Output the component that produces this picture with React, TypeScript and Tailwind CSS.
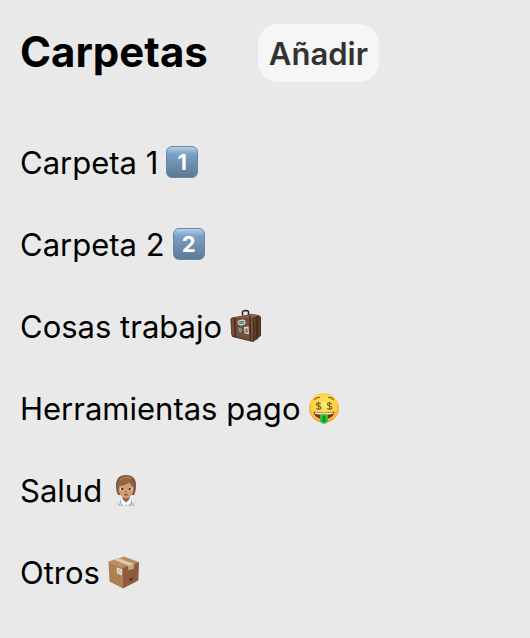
import type { ReactNode } from "react";

function Keycap({ digit }: { digit: string }) {
  return (
    <span className="flex size-8 items-center justify-center rounded-md border border-[#6488a8] bg-linear-to-b from-[#b5d0e5] via-[#789fc4] via-25% to-[#5e7a94] text-[22px] leading-none font-bold text-white">
      {digit}
    </span>
  );
}

function Suitcase() {
  return (
    <svg viewBox="0 0 32 34" className="h-[34px] w-8" aria-hidden="true">
      <path d="M12.5 6.500V3.500Q12.500 2 14 1.800L16.500 1.500Q18.500 1.500 18.500 3.500V6" fill="none" stroke="#282424" strokeWidth="1.500" />
      <path d="M2 8.500 22 5l7 1.300 2 2v18.500L23 33 2.600 28Q1.500 27 1.200 25L.5 11Q.4 9.400 2 8.500Z" fill="#4a2c20" />
      <path d="M2 9.500 21.500 7l1.500 2V32L3 27.300 1.400 24V11Z" fill="#74503b" />
      <path d="M2 8.900 22 5.500l7 1.300-6.500 2Z" fill="#8a634b" />
      <path d="m23.500 9 6.500-2.200.5 2v17.500L24 32Z" fill="#5c3a2a" />
      <path d="M4.500 9.300 5.500 28M20 7 20.500 31M27 7.500v23" stroke="#43271d" strokeWidth="1.300" />
      <ellipse cx="11.600" cy="13.500" rx="4" ry="2.800" transform="rotate(-12 11.600 13.500)" fill="#d8ddcd" />
      <ellipse cx="11.600" cy="13.500" rx="2.900" ry="1.700" transform="rotate(-12 11.600 13.500)" fill="#398e9c" />
      <path d="m9.200 14.500 2-1.500 1.500 1 1.500-.8" fill="none" stroke="#86a95b" />
      <path d="m8 20.500 2-2 2.500 2.500-2.200 2.500Z" fill="#83baa4" />
      <path d="m9.200 20.700 1-1 .9 1.400-.9 1Z" fill="#356a65" />
      <path d="m14 18 4.500-.6.4 7.800-4.300-.7Z" fill="#d8d6cb" />
      <path d="m15 19.500 2.700-.3.300 4.500-2.700-.3Z" fill="#74a0a4" />
      <path d="m16 23.500.5-5 1 5Z" fill="#c84d3b" />
    </svg>
  );
}

function MoneyFace() {
  return (
    <svg viewBox="0 0 32 32" className="size-8" aria-hidden="true">
      <defs>
        <radialGradient id="face" cx=".5" cy=".4" r=".6">
          <stop offset="0" stopColor="#ffec70" />
          <stop offset=".7" stopColor="#fdcf42" />
          <stop offset="1" stopColor="#f0a02a" />
        </radialGradient>
      </defs>
      <circle cx="16" cy="16" r="15" fill="url(#face)" />
      <path d="M6.500 7.700q2-2.500 5-2.200M20.500 5.500q3-.3 5 2.200" fill="none" stroke="#96601e" strokeWidth="1.200" strokeLinecap="round" />
      <g fill="none" stroke="#8a6a22" strokeWidth="1.300">
        <path d="M12.800 11.800q-4.300-2-4.300.4c0 2.300 4.500 1.200 4.500 3.500 0 2.200-4.300 1.200-4.700.6M10.600 9.800v8.200" />
        <path d="M23.800 11.800q-4.300-2-4.300.4c0 2.300 4.500 1.200 4.500 3.500 0 2.200-4.300 1.200-4.700.6M21.600 9.800v8.200" />
      </g>
      <path d="M5.500 19.500q10.500 2.500 21 0-1.300 7.700-10.500 7.700T5.500 19.500Z" fill="#713017" />
      <path d="M6.500 20.200q9.500 2 19 0l-.9 1.800q-8.600 1.400-17.200 0Z" fill="#fff1df" />
      <path d="M12 23q4-1.500 8 0v6q-1 2.800-4 2.800T12 29Z" fill="#29c437" />
      <path d="M17.800 25.400q-3.300-1.200-3.300.4c0 1.700 3.200.8 3.200 2.400 0 1.500-3 1-3.400.4M16 24v6" fill="none" stroke="#167a25" />
    </svg>
  );
}

function HealthWorker() {
  return (
    <svg viewBox="0 0 32 32" className="size-8" aria-hidden="true">
      <path d="M4.500 32q0-4.500 4.300-6l4.200-2h6l4.200 2q4.300 1.500 4.300 6Z" fill="#dfe3e6" />
      <path d="M12.500 21h7v4.500L16 28.500l-3.500-3Z" fill="#9b6541" />
      <path d="m11 26 5 3.500 5-3.500 1 6H10Z" fill="#b9cbd4" />
      <path d="m11.500 24.500-3 2 6 5.500 1.500-3Zm9 0 3 2-6 5.500-1.500-3Z" fill="#fafbfc" />
      <path d="M10.500 25.500v3.500q-1.500 1-1.500 3M21.500 25.500v3.700m-1.800 2.800q0-2.800 1.800-2.800t1.800 2.800" fill="none" stroke="#8d98a1" strokeWidth=".8" />
      <path d="M6.500 17C4.600 6 8 1 16 1s11.400 5 9.500 16l-1.500 4H8Z" fill="#80543a" />
      <path d="M8.500 10.500Q10 6 16 6t7.500 4.500V16q-.4 5-4.500 7.300-3 1.700-6 0Q8.900 21 8.500 16Z" fill="#d09d72" />
      <path d="M7.500 14Q7 4 17 4.300q7.500.7 7.500 9.200-3.500-1.500-5.500-5-4 3.300-9.500 3.500L8.500 16Z" fill="#946544" />
      <path d="M10 6q5-4.500 11-1.500" fill="none" stroke="#b08160" strokeWidth="1.500" strokeLinecap="round" />
      <ellipse cx="12" cy="15" rx="2" ry="1.500" fill="#f7f1e8" />
      <ellipse cx="20" cy="15" rx="2" ry="1.500" fill="#f7f1e8" />
      <circle cx="12.300" cy="15" r="1.200" fill="#35241a" />
      <circle cx="19.700" cy="15" r="1.200" fill="#35241a" />
      <path d="M15 18h2" stroke="#a06a46" />
      <path d="M13.500 20.500q2.500-1.200 5 0-2.500 2-5 0Z" fill="#80443c" />
    </svg>
  );
}

function Package() {
  return (
    <svg viewBox="0 0 32 33" className="h-[33px] w-8" aria-hidden="true">
      <path d="M.5 5.500 16 .5l15 5.500-16 5.500Z" fill="#bd8b5e" />
      <path d="m15 11.500 16-5.500-.7 18.500L15 32.500Z" fill="#8d5c3b" />
      <path d="m.5 5.500 14.500 6v21L1.500 25.500Z" fill="#b17e52" />
      <path d="m5.800 3.800 5.200-1.600 15 5.600v4.400L20.500 14.200V9.700Z" fill="#d9c2a3" />
      <path d="m20.500 9.700 5.500-1.900v4.400l-5.500 2Z" fill="#c2a583" />
      <path d="m8.200 3.200 15 5.500" stroke="#e8d5bc" strokeWidth=".8" />
      <path d="m8.800 11.300 5.200 2v6.200l-5.200-2.200Z" fill="#dcdbd5" />
      <path d="m10 13.500 2.800 1.100m-2.800 1 2.800 1.100" stroke="#a3a5a2" strokeWidth=".7" />
      <path d="m20.500 23.200 5-2.200-2 4.200Z" fill="#593620" />
    </svg>
  );
}

const folders: { name: string; icon: ReactNode }[] = [
  { name: "Carpeta 1", icon: <Keycap digit="1" /> },
  { name: "Carpeta 2", icon: <Keycap digit="2" /> },
  { name: "Cosas trabajo", icon: <Suitcase /> },
  { name: "Herramientas pago", icon: <MoneyFace /> },
  { name: "Salud", icon: <HealthWorker /> },
  { name: "Otros", icon: <Package /> },
];

export default function App() {
  return (
    <main className="min-h-screen bg-[#e9e9e9] px-5 py-6 font-['Inter',sans-serif] text-black">
      <header className="flex items-center gap-[50px]">
        <h1 className="pb-0.5 text-[42px] leading-[56px] font-bold">Carpetas</h1>
        <button type="button" className="h-[58px] rounded-[20px] bg-[#f6f6f6] px-[11px] pt-0.5 text-[31px] leading-10 font-semibold text-[#333333]">
          Añadir
        </button>
      </header>
      <ul className="mt-[60px] flex flex-col gap-[42px]">
        {folders.map(({ name, icon }) => (
          <li key={name} className="flex h-10 items-center gap-2 text-[31px] leading-10">
            <span className="pt-0.5">{name}</span>
            {icon}
          </li>
        ))}
      </ul>
    </main>
  );
}
